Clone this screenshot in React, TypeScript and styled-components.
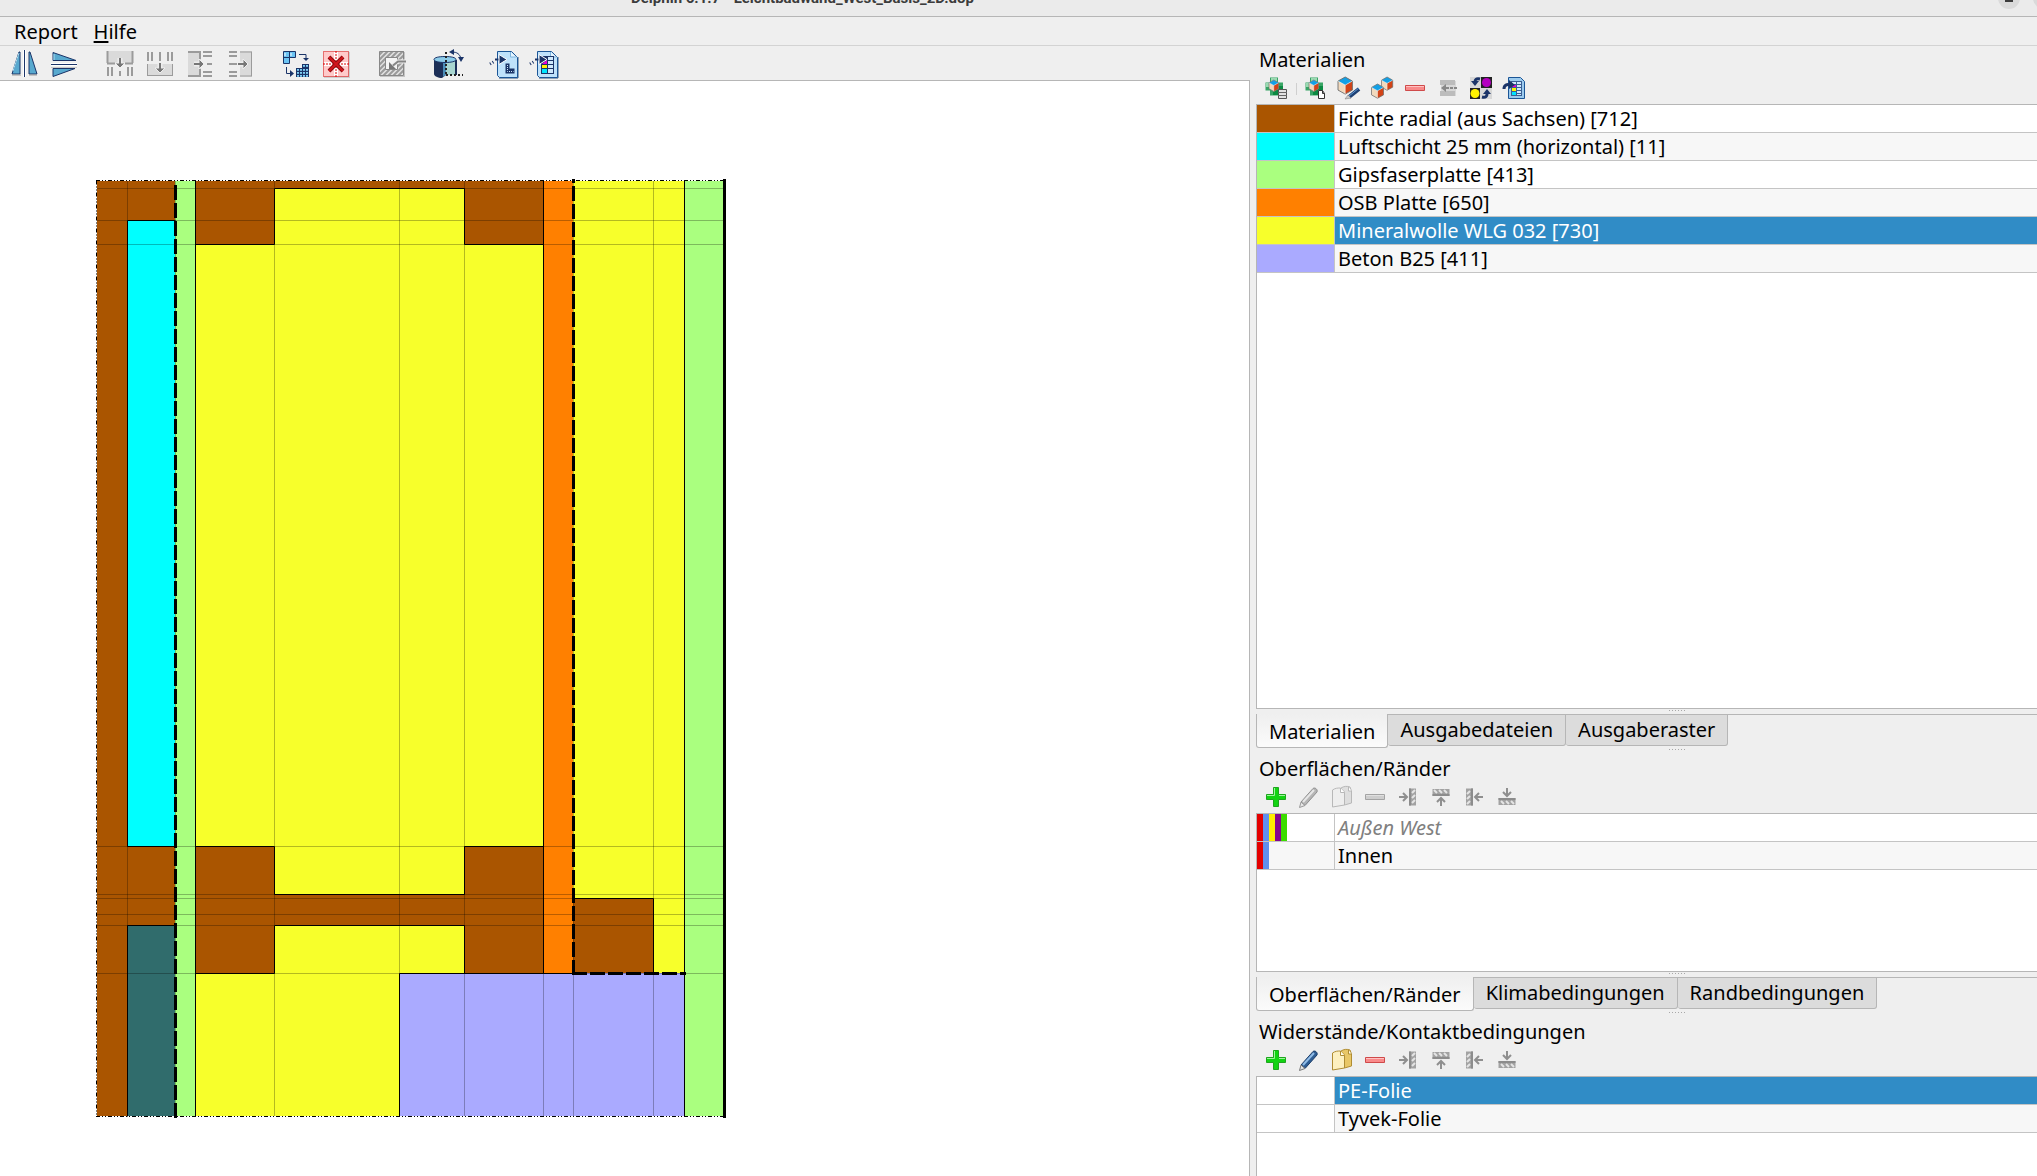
import React from "react";
import styled, { createGlobalStyle, css } from "styled-components";

const Global = createGlobalStyle`
  * { box-sizing: border-box; }
  body { margin: 0; }
  button, table { font: inherit; color: inherit; }
`;

const line = "#b6b6b6";

const Window = styled.div`
  display: flex;
  flex-direction: column;
  height: 100vh;
  overflow: hidden;
  background: #efefef;
  color: #000;
  font-family: "Noto Sans", "Open Sans", sans-serif;
  font-size: 20px;
  line-height: 26px;
`;

const TitleBar = styled.header`
  display: flex;
  align-items: flex-end;
  flex: none;
  height: 17px;
  overflow: hidden;
  background: #ebebeb;
  border-bottom: 1px solid ${line};
`;

const TitleRow = styled.div`
  display: flex;
  flex: 1;
  align-items: center;
  justify-content: space-between;
  height: 36px;
  padding-left: 631px;
`;

const Title = styled.h1`
  margin: 0;
  font-size: 15px;
  line-height: 24px;
  font-family: Roboto, "Noto Sans", sans-serif;
  font-weight: 700;
  color: #3c3c3c;
  white-space: nowrap;
`;

const WindowButtons = styled.div`
  display: flex;
  gap: 13px;
  margin-right: -18px;
`;

const WindowButton = styled.button`
  display: grid;
  place-items: center;
  width: 22px;
  height: 22px;
  padding: 0;
  border: 0;
  border-radius: 50%;
  background: #dadada;
`;

const MenuBar = styled.nav`
  display: flex;
  flex: none;
  gap: 16px;
  height: 29px;
  padding: 0 14px;
  border-bottom: 1px solid #d3d3d3;
`;

const MenuItem = styled.button`
  padding: 2px 0 0;
  border: 0;
  background: none;
  line-height: 26px;
  u { text-underline-offset: 2px; text-decoration-thickness: 2px; }
`;

const Workspace = styled.main`
  display: flex;
  flex: 1;
  gap: 6px;
  min-height: 0;
`;

const Editor = styled.section`
  display: flex;
  flex: 1;
  flex-direction: column;
  min-width: 0;
`;

const EditorTools = styled.div`
  display: flex;
  flex: none;
  align-items: center;
  height: 34px;
  padding-left: 4px;
`;

const ToolGap = styled.span`
  width: 16px;
`;

const ToolButton = styled.button<{ $small?: boolean }>`
  display: flex;
  width: ${(p) => (p.$small ? 33 : 40)}px;
  height: 31px;
  padding: ${(p) => (p.$small ? "4px 0 0 5px" : "2px 0 0 6px")};
  border: 0;
  background: none;
  svg { display: block; overflow: visible; flex: none; }
`;

const Canvas = styled.div`
  flex: 1;
  min-height: 0;
  overflow: hidden;
  padding: 95px 0 0 92px;
  background: #fff;
  border-top: 1px solid ${line};
  border-right: 1px solid ${line};
  svg { display: block; }
`;

const Side = styled.aside`
  display: flex;
  flex: none;
  flex-direction: column;
  width: 781px;
`;

const Dock = styled.section<{ $height?: number }>`
  display: flex;
  flex-direction: column;
  min-height: 0;
  ${(p) => (p.$height ? css`flex: none; height: ${p.$height}px;` : css`flex: 1;`)}
`;

const DockTitle = styled.h2<{ $first?: boolean }>`
  flex: none;
  margin: 0;
  padding: ${(p) => (p.$first ? 1 : 3)}px 0 0 3px;
  font-size: 20px;
  font-weight: 400;
  line-height: 26px;
`;

const DockTools = styled.div`
  display: flex;
  flex: none;
  align-items: center;
  height: 31px;
  padding-left: 4px;
`;

const Separator = styled.span`
  width: 1px;
  height: 12px;
  margin: 0 3px;
  background: #cfcfcf;
`;

const List = styled.div<{ $open?: boolean }>`
  flex: 1;
  min-height: 0;
  overflow: hidden;
  background: #fff;
  border: 1px solid ${line};
  border-right: 0;
  ${(p) => p.$open && css`border-bottom: 0;`}
`;

const Table = styled.table`
  width: 100%;
  border-collapse: separate;
  border-spacing: 0;
  table-layout: fixed;
`;

const Row = styled.tr`
  height: 28px;
  background: #fff;
  &:nth-child(even) { background: #f7f7f7; }
`;

const Swatch = styled.td<{ $color?: string }>`
  width: 78px;
  padding: 0;
  background: ${(p) => p.$color || "transparent"};
  border-right: 1px solid #c4c4c4;
  border-bottom: 1px solid #c4c4c4;
`;

const Stripes = styled.div`
  display: flex;
  height: 27px;
`;

const Stripe = styled.span<{ $color: string }>`
  width: 6px;
  background: ${(p) => p.$color};
`;

const Name = styled.td<{ $selected?: boolean; $muted?: boolean }>`
  height: 28px;
  padding: 0 3px;
  line-height: 26px;
  white-space: nowrap;
  border-bottom: 1px solid #c4c4c4;
  ${(p) => p.$selected && css`background: #308cc6; color: #fff;`}
  ${(p) => p.$muted && css`color: #808080; font-style: italic;`}
`;

const Splitter = styled.div`
  display: flex;
  flex: none;
  justify-content: center;
  gap: 2px;
  height: 5px;
  padding: 1px 0 0 60px;
`;

const Dot = styled.i`
  width: 1px;
  height: 1px;
  background: #a8a8a8;
`;

const Tabs = styled.div`
  display: flex;
  flex: none;
  height: 34px;
`;

const Tab = styled.button<{ $active?: boolean }>`
  height: 32px;
  padding: 0 12px;
  line-height: 26px;
  background: #dcdcdc;
  border: 1px solid ${line};
  border-left: 0;
  border-radius: 0 0 3px 3px;
  ${(p) =>
    p.$active &&
    css`
      height: 34px;
      padding-top: 3px;
      background: linear-gradient(#efefef, #fbfbfb);
      border-left: 1px solid ${line};
      border-top: 0;
    `}
`;

const TabRest = styled.span`
  flex: 1;
  border-top: 1px solid ${line};
`;

/* ---------- editor icons (28 x 28) ---------- */

const navy = "#1b3468";
const Big = ({ children }: { children: React.ReactNode }) => (
  <svg width="28" height="28" viewBox="0 0 28 28" aria-hidden="true">
    {children}
  </svg>
);
const Small = ({ children }: { children: React.ReactNode }) => (
  <svg width="22" height="22" viewBox="0 0 22 22" aria-hidden="true">
    {children}
  </svg>
);

const MirrorH = () => (
  <Big>
    <path d="M9 2h1v22H2z" fill="#58a9cf" stroke={navy} strokeWidth="1" />
    <path d="M9 3L3 21" stroke="#a9dcf0" />
    <path d="M19 2h1l7 22h-8z" fill="#58a9cf" stroke={navy} strokeWidth="1" />
    <path d="M2 25h9M19 25h8" stroke="#9a9a9a" />
    <path d="M13.500 0v27M15.500 0v27" stroke="#fff" />
    <path d="M14.500 0v27" stroke={navy} />
  </Big>
);

const MirrorV = () => (
  <Big>
    <path d="M3 2.500l23 8H3z" fill="#58a9cf" stroke={navy} />
    <path d="M3 18.500h22l-22 8z" fill="#58a9cf" stroke={navy} />
    <path d="M4 4v6" stroke="#a9dcf0" />
    <path d="M1 14.500h26" stroke="#fff" strokeWidth="3" />
    <path d="M1 14.500h26" stroke={navy} />
    <path d="M1 17.500h26" stroke="#c9c9c9" />
  </Big>
);

const grey = "#9b9b9b";
const ArrowDown = ({ y }: { y: number }) => (
  <g>
    <path d={`M14 ${y}v6`} stroke="#eee" strokeWidth="5" />
    <path d={`M9 ${y + 5}h10l-5 5z`} fill="#777" stroke="#eee" />
    <path d={`M14 ${y}v6`} stroke="#777" strokeWidth="2" />
  </g>
);
const ArrowRight = ({ x }: { x: number }) => (
  <g>
    <path d={`M${x} 14h6`} stroke="#eee" strokeWidth="5" />
    <path d={`M${x + 5} 9v10l5-5z`} fill="#777" stroke="#eee" />
    <path d={`M${x} 14h6`} stroke="#777" strokeWidth="2" />
  </g>
);

const RowAbove = () => (
  <Big>
    <path d="M1 1h26v12H1z" fill="#dadada" />
    <path d="M1.500 1v12M26.500 1v12M1 13.500h8M19 13.500h8" stroke={grey} strokeWidth="2" />
    <path d="M2 17v9M6 17v9M14 21v5M22 17v9M26 17v9" stroke={grey} strokeWidth="2" />
    <ArrowDown y={8} />
  </Big>
);
const RowBelow = () => (
  <Big>
    <path d="M2 2v9M6 2v9M14 2v9M22 2v9M26 2v9" stroke={grey} strokeWidth="2" />
    <path d="M1 14h26v12H1z" fill="#dadada" />
    <path d="M1.500 14v12M26.500 14v12M1 25.500h26" stroke={grey} strokeWidth="1" />
    <ArrowDown y={13} />
  </Big>
);
const ColLeft = () => (
  <Big>
    <path d="M2 1h13v26H2z" fill="#dadada" />
    <path d="M2 2h13M2 26h13M14 2v7M14 19v7" stroke={grey} strokeWidth="2" />
    <path d="M17 2h9M17 6h9M21 14h5M17 22h9M17 26h9" stroke={grey} strokeWidth="2" />
    <ArrowRight x={8} />
  </Big>
);
const ColRight = () => (
  <Big>
    <path d="M3 2h8M3 6h8M3 14h8M3 22h8M3 26h8" stroke={grey} strokeWidth="2" />
    <path d="M14 1h12v26H14z" fill="#dadada" />
    <path d="M14 2h12M14 26h12M25.500 2v24" stroke={grey} />
    <ArrowRight x={12} />
  </Big>
);

const Transfer = () => (
  <Big>
    <path d="M1.500 1.500h12v6h-6v6h-6z" fill="#6cc4f3" stroke={navy} />
    <path d="M7.500 1.500v6h-6" fill="none" stroke={navy} />
    <path d="M3 3v3M9 3v3" stroke="#fff" />
    <path d="M17 4.500h7v5" fill="none" stroke={navy} />
    <path d="M21 8h6l-3 3z" fill={navy} />
    <path d="M4.500 17v6.500h5" fill="none" stroke={navy} />
    <path d="M8 20v7l4-3.500z" fill={navy} />
    <path d="M20 14h7v13H14v-9h6z" fill={navy} />
    {[
      [21, 15], [24, 15],
      [15, 19], [18, 19], [21, 19], [24, 19],
      [15, 22], [18, 22], [21, 22], [24, 22],
      [15, 25], [18, 25], [21, 25], [24, 25],
    ].map(([x, y]) => (
      <rect key={`${x}-${y}`} x={x} y={y} width="2" height="1.800" fill="#7fd0f5" />
    ))}
  </Big>
);

const DeleteGrid = () => (
  <Big>
    <path d="M2 2h26v26H2z" fill="#cfcfcf" />
    <path d="M1.500 1.500h25v25h-25z" fill="#ffcaca" stroke="#d40000" strokeDasharray="1 1" />
    <path d="M14 2v24M2 14h24" stroke="#fff" strokeWidth="4" />
    <path d="M14 1v26M1 14h26" stroke="#d00" strokeWidth="1" strokeDasharray="2 1" />
    <path d="M7 7l14 14M21 7L7 21" stroke="#8c0d12" strokeWidth="4" />
    <path d="M7 7l14 14M21 7L7 21" stroke="#d3151b" strokeWidth="2" />
  </Big>
);

const Hatch = () => (
  <Big>
    <clipPath id="frame">
      <path d="M1 1h25v25H1z" />
    </clipPath>
    <path d="M2 2h25v25H2z" fill="#c4c4c4" />
    <path d="M1 1h25v25H1z" fill="#e2e2e2" />
    <g clipPath="url(#frame)" stroke="#9a9a9a" strokeWidth="2">
      {[6, 11, 16, 21, 26, 31, 36, 41, 46].map((n) => (
        <path key={n} d={`M0 ${n}L${n} 0`} />
      ))}
    </g>
    <path d="M1.500 1.500h24v24h-24z" fill="none" stroke="#888" />
    <path d="M7.500 7.500h12v12h-12z" fill="#f4f4f4" stroke="#888" />
    <path d="M28 11.500h-8l-5 4" fill="none" stroke="#eee" strokeWidth="4" />
    <path d="M28 11.500h-8l-5 4" fill="none" stroke="#858585" strokeWidth="2" />
    <path d="M11 12v7h7z" fill="#777" />
  </Big>
);

const Cylinder = () => (
  <Big>
    <path d="M0 10v14c0 2 4 4 8 4l4-3V10z" fill="#1c2f57" />
    <path d="M9 12h4v12l-4 3z" fill="#4b8db8" />
    <path d="M12 10h9v15h-9z" fill="#a9d6d0" />
    <path d="M22 10v15" stroke="#1c2f57" strokeWidth="2" />
    <path d="M0 9.500c0-2 5-3 11-3s11 1 11 3-5 3-11 3-11-1-11-3z" fill="#8ccbe8" stroke={navy} />
    <path d="M12 2v24" stroke="#222" strokeWidth="2" strokeDasharray="2 2" />
    <path d="M12 25h17" stroke="#222" strokeWidth="2" strokeDasharray="2 2" />
    <path d="M18 2c5 0 8 2 9 7" fill="none" stroke={navy} />
    <path d="M15 2l5-3v6zM24 7h6l-3 5z" fill={navy} />
  </Big>
);

const Page = () => (
  <g>
    <path d="M9 28h19V7" fill="none" stroke="#35567e" strokeWidth="1" />
    <path d="M7.500 1.500h14l6 6v20h-18l-2-2z" fill="#bfe2fb" stroke="#1b5596" />
    <path d="M20.500 2v5h6" fill="#e6f5ff" stroke="#7db4de" />
  </g>
);
const PageArrow = () => (
  <g>
    <path d="M0 14l5-3" stroke={navy} strokeWidth="3" strokeDasharray="1 2" />
    <path d="M5 9.500h6" stroke={navy} strokeWidth="2" />
    <path d="M9 4.500l8 5-8 5z" fill={navy} stroke="#fff" />
  </g>
);
const ImportPage = () => (
  <Big>
    <Page />
    <path d="M15.500 13.500h4v5h5v5h-9z" fill={navy} />
    <path d="M17.500 15v6.500h6" fill="none" stroke="#cfe8fb" strokeDasharray="1 1" />
    <PageArrow />
  </Big>
);
const ImportTable = () => (
  <Big>
    <Page />
    <path d="M11 6h13v18H11z" fill={navy} />
    <path d="M18 7h5v3h-5zM18 11h5v3h-5zM18 15h5v3h-5zM18 19h5v4h-5z" fill="#cfe8fb" />
    <path d="M17 10v4h-5z" fill="#e600d6" />
    <path d="M12 15h5v3h-5z" fill="#fff200" />
    <path d="M12 19h5v4h-5z" fill="#00e5ff" />
    <PageArrow />
  </Big>
);

/* ---------- dock icons (22 x 22) ---------- */

const Cube = ({ x, y, s }: { x: number; y: number; s: number }) => (
  <g transform={`translate(${x} ${y}) scale(${s})`}>
    <path d="M8 0l8 4.500v10L8 19l-8-4.500v-10z" fill="#f1d9bd" />
    <path d="M16 4.500L8 9v10l8-4.500z" fill="#d24317" />
    <path d="M8 0l8 4.500L8 9 0 4.500z" fill="#12a0e6" />
    <path d="M8 0l8 4.500v10L8 19l-8-4.500v-10z" fill="none" stroke="#6d6d6d" />
    <path d="M0 4.500L8 9l8-4.500M8 9v10" fill="none" stroke="#fff" strokeOpacity=".6" />
  </g>
);
const GreenCross = () => (
  <g>
    <path d="M5 .500h8v5h5v8h-5v5H5v-5H.500v-8H5z" fill="#39a566" />
    <path d="M6 1h6v4H6zM1 6h4v4H1z" fill="#9bdab2" />
    <path d="M13 9h5v4h-5v5H8v-4z" fill="#0c8a42" />
    <Cube x={4} y={3} s={0.6} />
  </g>
);
const AddFromDb = () => (
  <Small>
    <GreenCross />
    <path d="M13.500 12.500h8v9h-8z" fill="#e2e2e2" stroke="#555" />
    <path d="M13 15.500h9M13 18.500h9" stroke="#666" />
  </Small>
);
const AddNew = () => (
  <Small>
    <GreenCross />
    <path d="M13.500 13.500h4l2 3v5h-6z" fill="#fff" stroke="#333" />
    <path d="M17.500 13.500v3h2" fill="none" stroke="#333" />
  </Small>
);
const EditCube = () => (
  <Small>
    <Cube x={0} y={0} s={0.9} />
    <path d="M21 12l-10 8" stroke="#1d3f73" strokeWidth="4" />
    <path d="M21 11L11 19" stroke="#5f9bd6" strokeWidth="1" />
    <path d="M7 22l3-4 3 3z" fill="#c9c9c9" stroke="#777" strokeWidth=".500" />
  </Small>
);
const CopyCube = () => (
  <Small>
    <Cube x={10.500} y={0} s={0.700} />
    <Cube x={0.500} y={7} s={0.750} />
  </Small>
);
const Minus = ({ off }: { off?: boolean }) => (
  <Small>
    <path d="M1.500 8.500h19v5h-19z" fill={off ? "#cdcdcd" : "#f98a8a"} stroke={off ? "#a3a3a3" : "#cf4a4a"} />
    <path d="M2 9.500h18" stroke={off ? "#e0e0e0" : "#ffc2c2"} />
  </Small>
);
const Assign = () => (
  <Small>
    <path d="M4 4h15v15H4z" fill="#d8d8d8" />
    <path d="M3 3h15v5H3zM3 14h15v5H3z" fill="#bcbcbc" />
    <path d="M8 11h4" stroke="#888" strokeWidth="2" />
    <path d="M4 11l5-4v8z" fill="#888" />
    <path d="M13 11h7" stroke="#888" strokeWidth="2" strokeDasharray="3 1" />
  </Small>
);
const Swap = () => (
  <Small>
    <path d="M0 0h22v22H0z" fill="#d8d8d8" />
    <path d="M11 0h11v11H11zM0 11h10v11H0z" fill="#222" />
    <circle cx="16.500" cy="5.500" r="4.500" fill="#b400c0" />
    <circle cx="5" cy="16.500" r="4.500" fill="#fff200" />
    <path d="M10 2C6 1 5 3 5 5" fill="none" stroke={navy} strokeWidth="3" />
    <path d="M1 4h8l-4 5z" fill={navy} />
    <path d="M12 20c4 1 5-1 5-3" fill="none" stroke={navy} strokeWidth="3" />
    <path d="M13 17h8l-4-5z" fill={navy} />
  </Small>
);
const ExportTable = () => (
  <Small>
    <path d="M5.500.500h12l4 4v17h-16z" fill="#9ccbee" stroke="#1b5596" />
    <path d="M8 4h11v15H8z" fill="#3a5f94" />
    <path d="M14 5h4v2h-4zM14 8h4v2h-4zM14 11h4v2h-4zM14 14h4v2h-4zM14 17h4v1h-4zM9 5h4v2H9z" fill="#cfe8fb" />
    <path d="M9 8h4v2H9z" fill="#e600d6" />
    <path d="M9 11h4v3H9z" fill="#fff200" />
    <path d="M9 15h4v3H9z" fill="#00e5ff" />
    <path d="M1 12c0-4 3-5 6-4" fill="none" stroke={navy} strokeWidth="3" />
    <path d="M6 3l6 5-6 4z" fill={navy} />
  </Small>
);
const Plus = () => (
  <Small>
    <path d="M8.500 1.500h5v7h7v5h-7v7h-5v-7h-7v-5h7z" fill="#12d412" stroke="#1ea51e" />
    <path d="M9.500 2v7.500H2M14 9.500h6" fill="none" stroke="#9bf59b" />
  </Small>
);
const Pencil = ({ off }: { off?: boolean }) => (
  <Small>
    <path d="M3 16L15 2.500c2-1.500 5 1 4 3.500L7 19.500z" fill={off ? "#b5b5b5" : "#2d5c93"} stroke={off ? "#8f8f8f" : "#1b3c68"} />
    <path d="M5 16L16 4" stroke={off ? "#e6e6e6" : "#8fbbe6"} strokeWidth="2" />
    <path d="M1.500 21.500L3 16l4 3.500z" fill="#e6e6e6" stroke={off ? "#999" : "#777"} />
  </Small>
);
const Files = ({ off }: { off?: boolean }) => {
  const edge = off ? "#b8b8b8" : "#b08d33";
  return (
    <Small>
      <path d="M10 2c3-2 6-2 9-1l1.500 4v12l-7 2z" fill={off ? "#dedede" : "#e9c766"} stroke={edge} />
      <path d="M1.500 4c3-2 5-2 8-2l4 4v13l-12 2z" fill={off ? "#eee" : "#fdf0bf"} stroke={edge} />
      <path d="M9.500 2v4.500h4M17.500 1v4h3" fill={off ? "#fff" : "#fffbe8"} stroke={edge} />
    </Small>
  );
};
const Edge = ({ turn }: { turn: number }) => (
  <Small>
    <g transform={`rotate(${turn} 11 11)`}>
      <path d="M12 2.500h7v17h-7z" fill="#a2a2a2" />
      <path d="M15 7l3-3M15 12l3-3M15 17l3-3" stroke="#e4e4e4" strokeWidth="2" />
      <path d="M13 2.500v17" stroke="#8c8c8c" strokeWidth="2" />
      <path d="M2 11h7" stroke="#8f8f8f" strokeWidth="2" />
      <path d="M6 7l4 4-4 4" fill="none" stroke="#8f8f8f" strokeWidth="2" />
    </g>
  </Small>
);

/* ---------- construction drawing ---------- */

const xs = [127, 175, 195, 274, 399, 464, 543, 573, 653, 684];
const ys = [188, 220, 244, 846, 894, 898, 914, 925, 973];
const wood = "#aa5500";
const wool = "#f7ff2b";
const gypsum = "#aaff7f";

const fills: [number, number, number, number, string][] = [
  [97, 181, 175, 1116, wood],
  [127, 220, 175, 846, "#00ffff"],
  [127, 925, 175, 1116, "#306c6c"],
  [175, 181, 195, 1116, gypsum],
  [195, 181, 543, 1116, wool],
  [195, 181, 543, 188, wood],
  [195, 181, 274, 244, wood],
  [464, 181, 543, 244, wood],
  [195, 846, 274, 973, wood],
  [464, 846, 543, 973, wood],
  [274, 894, 464, 925, wood],
  [543, 181, 573, 973, "#ff8000"],
  [573, 181, 684, 973, wool],
  [573, 898, 653, 973, wood],
  [399, 973, 684, 1116, "#aaaaff"],
  [684, 181, 724, 1116, gypsum],
];

const Construction = () => (
  <svg width="640" height="946" viewBox="92 176 640 946" role="img" aria-label="Konstruktion">
    {fills.map(([x1, y1, x2, y2, color], i) => (
      <rect key={i} x={x1} y={y1} width={x2 - x1} height={y2 - y1} fill={color} shapeRendering="crispEdges" />
    ))}
    <g transform="translate(.5 .5)" fill="none" stroke="#000">
      <g strokeOpacity=".27">
        {xs.map((x) => (
          <path key={x} d={`M${x} 180.500V1115.500`} />
        ))}
        {ys.map((y) => (
          <path key={y} d={`M96.500 ${y}H723.500`} />
        ))}
      </g>
      <path d="M195 180V1116M684 180V1116M543 180V973M399 1116V973H573M127 220H175M127 220V846H175M127 1116V925H175" />
      <path d="M195 244H274V188H464V244H543M195 846H274V894H464V846H543M195 973H274V925H464V973M573 898H653V973" />
      <path d="M95.500 180H724M95.500 1116H724M96 180V1116" strokeDasharray="4 2 1 2 1 2" />
      <g strokeWidth="3" strokeDasharray="15 3">
        <path d="M175 184.500V922" />
        <path d="M175 922.500V1117.500" />
        <path d="M573 185.500V974.500" />
        <path d="M571.500 973H685.500" />
      </g>
      <path d="M573 178.500V182.500M724 178.500V1117.500" strokeWidth="3" />
    </g>
  </svg>
);

/* ---------- composition ---------- */

const Grip = () => (
  <Splitter>
    {[0, 1, 2, 3, 4, 5].map((n) => (
      <Dot key={n} />
    ))}
  </Splitter>
);

const TabBar = ({ labels }: { labels: string[] }) => (
  <Tabs role="tablist">
    {labels.map((label, i) => (
      <Tab key={label} role="tab" aria-selected={i === 0} $active={i === 0}>
        {label}
      </Tab>
    ))}
    <TabRest />
  </Tabs>
);

type Tool = [string, React.ReactNode];

const editorTools: Tool[][] = [
  [["Horizontal spiegeln", <MirrorH />], ["Vertikal spiegeln", <MirrorV />]],
  [["Zeile oben", <RowAbove />], ["Zeile unten", <RowBelow />], ["Spalte links", <ColLeft />], ["Spalte rechts", <ColRight />]],
  [["Raster", <Transfer />], ["Raster entfernen", <DeleteGrid />]],
  [["Bereich", <Hatch />]],
  [["Rotationssymmetrie", <Cylinder />]],
  [["Geometrie importieren", <ImportPage />], ["Tabelle importieren", <ImportTable />]],
];

const materialTools: Tool[] = [
  ["Neu", <AddNew />],
  ["Bearbeiten", <EditCube />],
  ["Kopieren", <CopyCube />],
  ["Entfernen", <Minus />],
  ["Zuweisen", <Assign />],
  ["Tauschen", <Swap />],
  ["Exportieren", <ExportTable />],
];

const edgeTools = (off: boolean): Tool[] => [
  ["Neu", <Plus />],
  ["Bearbeiten", <Pencil off={off} />],
  ["Kopieren", <Files off={off} />],
  ["Entfernen", <Minus off={off} />],
  ["Links zuweisen", <Edge turn={0} />],
  ["Oben zuweisen", <Edge turn={270} />],
  ["Rechts zuweisen", <Edge turn={180} />],
  ["Unten zuweisen", <Edge turn={90} />],
];

const Tools = ({ items, small }: { items: Tool[]; small?: boolean }) => (
  <>
    {items.map(([label, icon]) => (
      <ToolButton key={label} aria-label={label} $small={small}>
        {icon}
      </ToolButton>
    ))}
  </>
);

const materials = [
  { name: "Fichte radial (aus Sachsen) [712]", color: wood },
  { name: "Luftschicht 25 mm (horizontal) [11]", color: "#00ffff" },
  { name: "Gipsfaserplatte [413]", color: gypsum },
  { name: "OSB Platte [650]", color: "#ff8000" },
  { name: "Mineralwolle WLG 032 [730]", color: wool, selected: true },
  { name: "Beton B25 [411]", color: "#aaaaff" },
];

const surfaces = [
  { name: "Außen West", muted: true, stripes: ["#e40000", "#608fec", "#ffec00", "#85048f", "#3bdc00"] },
  { name: "Innen", stripes: ["#e40000", "#608fec"] },
];

export default function App() {
  return (
    <>
      <Global />
      <Window>
        <TitleBar>
          <TitleRow>
            <Title>Delphin 6.1.7 - Leichtbauwand_West_Basis_2D.dop</Title>
            <WindowButtons>
              <WindowButton aria-label="Minimieren">
                <svg width="8" height="8" viewBox="0 0 8 8"><path d="M0 5h8v3H0z" fill="#3c3c3c" /></svg>
              </WindowButton>
              <WindowButton aria-label="Maximieren" />
            </WindowButtons>
          </TitleRow>
        </TitleBar>
        <MenuBar>
          <MenuItem>Report</MenuItem>
          <MenuItem><u>H</u>ilfe</MenuItem>
        </MenuBar>
        <Workspace>
          <Editor>
            <EditorTools>
              {editorTools.map((group, i) => (
                <React.Fragment key={i}>
                  {i > 0 && <ToolGap />}
                  <Tools items={group} />
                </React.Fragment>
              ))}
            </EditorTools>
            <Canvas><Construction /></Canvas>
          </Editor>
          <Side>
            <Dock>
              <DockTitle $first>Materialien</DockTitle>
              <DockTools>
                <Tools small items={[["Aus Datenbank", <AddFromDb />]]} />
                <Separator />
                <Tools small items={materialTools} />
              </DockTools>
              <List>
                <Table aria-label="Materialien">
                  <tbody>
                    {materials.map((m) => (
                      <Row key={m.name}>
                        <Swatch $color={m.color} />
                        <Name $selected={m.selected}>{m.name}</Name>
                      </Row>
                    ))}
                  </tbody>
                </Table>
              </List>
            </Dock>
            <Grip />
            <TabBar labels={["Materialien", "Ausgabedateien", "Ausgaberaster"]} />
            <Grip />
            <Dock $height={219}>
              <DockTitle>Oberflächen/Ränder</DockTitle>
              <DockTools><Tools small items={edgeTools(true)} /></DockTools>
              <List>
                <Table aria-label="Oberflächen/Ränder">
                  <tbody>
                    {surfaces.map((s) => (
                      <Row key={s.name}>
                        <Swatch>
                          <Stripes>{s.stripes.map((c) => <Stripe key={c} $color={c} />)}</Stripes>
                        </Swatch>
                        <Name $muted={s.muted}>{s.name}</Name>
                      </Row>
                    ))}
                  </tbody>
                </Table>
              </List>
            </Dock>
            <Grip />
            <TabBar labels={["Oberflächen/Ränder", "Klimabedingungen", "Randbedingungen"]} />
            <Grip />
            <Dock $height={160}>
              <DockTitle>Widerstände/Kontaktbedingungen</DockTitle>
              <DockTools><Tools small items={edgeTools(false)} /></DockTools>
              <List $open>
                <Table aria-label="Widerstände/Kontaktbedingungen">
                  <tbody>
                    <Row><Swatch $color="#fff" /><Name $selected>PE-Folie</Name></Row>
                    <Row><Swatch $color="#fff" /><Name>Tyvek-Folie</Name></Row>
                  </tbody>
                </Table>
              </List>
            </Dock>
          </Side>
        </Workspace>
      </Window>
    </>
  );
}
